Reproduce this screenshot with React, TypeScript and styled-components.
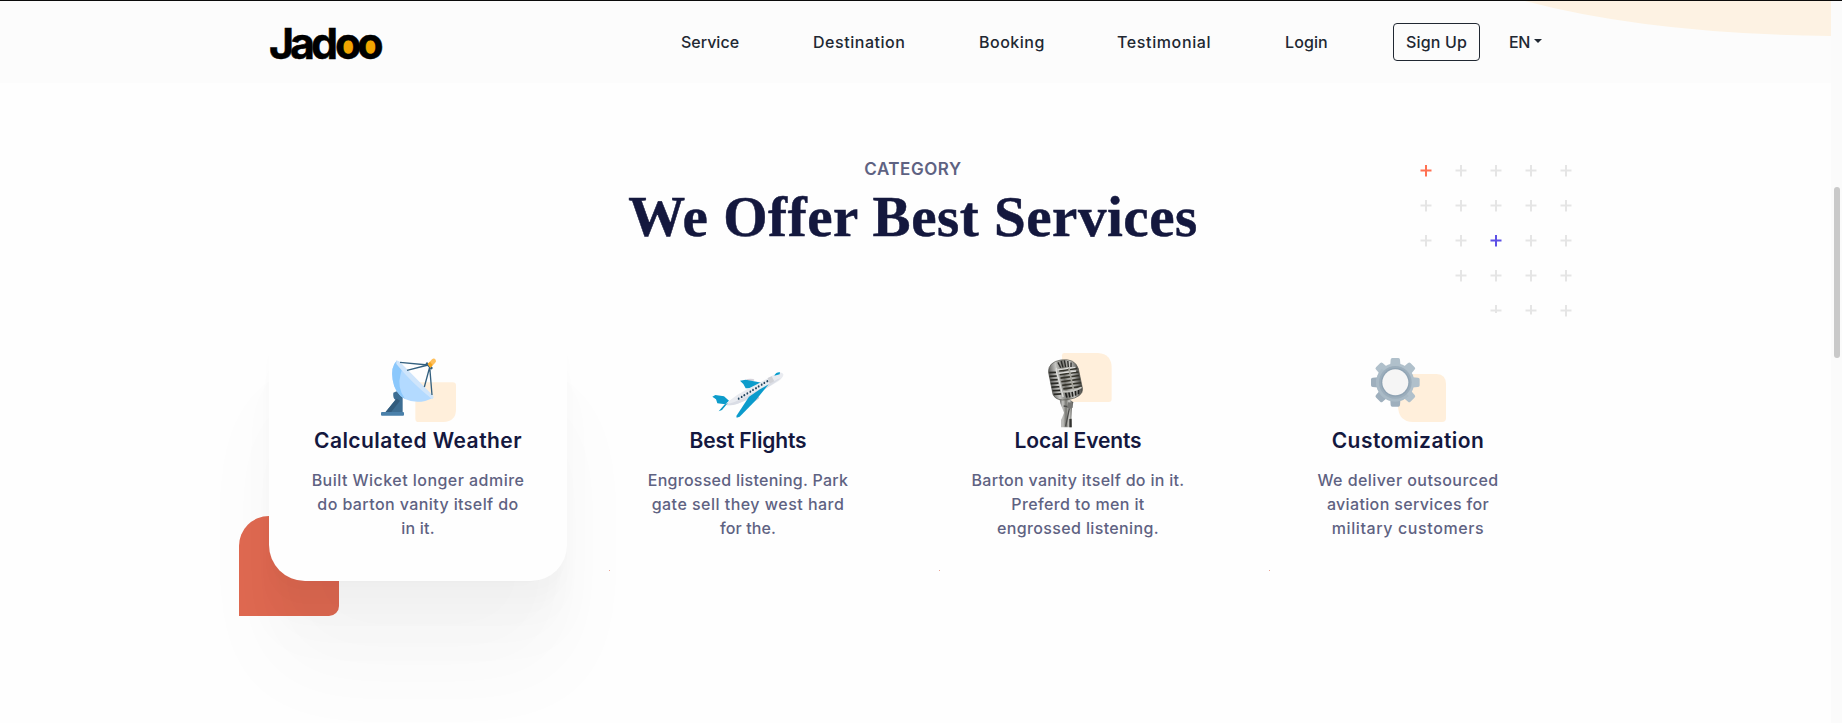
import React from 'react';
import styled, { createGlobalStyle } from 'styled-components';

const GlobalStyle = createGlobalStyle`
  * { box-sizing: border-box; }
  body { margin: 0; background: #fefefe; overflow: hidden; font-family: Inter, sans-serif; }
  h1, h2, h3, p { margin: 0; }
`;

const Page = styled.div`
  display: grid;
  grid-template-columns: 1fr 11px;
  height: 723px;
  border-top: 1px solid #0b0b0b;
  overflow: hidden;
`;

const Content = styled.main`
  position: relative;
  z-index: 0;
  min-width: 0;
`;

const ScrollTrack = styled.div`
  display: flex;
  justify-content: center;
  background: #fbfbfb;
`;

const ScrollThumb = styled.div`
  width: 6px;
  height: 171px;
  margin: 186px 0 0 1px;
  border-radius: 3px;
  background: #c9c9c9;
`;

const HeroCurve = styled.svg`
  position: absolute;
  top: 0;
  right: 0;
  z-index: -1;
`;

const Header = styled.header`
  display: flex;
  height: 82px;
  padding-left: 265px;
  background: rgba(250, 250, 250, 0.45);
`;

const Logo = styled.svg`
  flex: none;
  margin-top: 14px;
`;

const Nav = styled.nav`
  display: flex;
  gap: 74px;
  margin: 28.5px 0 0 286px;
`;

const NavLink = styled.a<{ $width: number; $tracking: number }>`
  width: ${(p) => p.$width}px;
  color: #212832;
  font-size: 16px;
  font-weight: 500;
  line-height: 24px;
  letter-spacing: ${(p) => p.$tracking}px;
  white-space: nowrap;
`;

const SignUp = styled.button`
  flex: none;
  width: 87px;
  height: 38px;
  margin: 22px 0 0 66px;
  padding: 0 0 1px;
  border: 1px solid #212832;
  border-radius: 4px;
  background: transparent;
  color: #212832;
  font: 500 16px/24px Inter, sans-serif;
  letter-spacing: 0.16px;
`;

const Language = styled.div`
  display: flex;
  gap: 5px;
  margin: 28.5px 0 0 29px;
  color: #212832;
  font-size: 16px;
  font-weight: 500;
  line-height: 24px;
  letter-spacing: -0.5px;
`;

const Caret = styled.span`
  width: 0;
  height: 0;
  margin-top: 9.5px;
  margin-left: -1px;
  border: 4px solid transparent;
  border-top-color: #212832;
  border-bottom: 0;
`;

const Intro = styled.section`
  width: 1320px;
  margin-left: 253px;
  padding-top: 74px;
  text-align: center;
`;

const Eyebrow = styled.h3`
  color: #5e6282;
  font-size: 17px;
  font-weight: 600;
  line-height: 24px;
  letter-spacing: 0.55px;
`;

const Heading = styled.h1`
  padding-top: 2px;
  color: #14183e;
  font: 700 57px/68px 'Liberation Serif', serif;
  letter-spacing: 0.54px;
  -webkit-text-stroke: 0.5px #14183e;
`;

const PlusPattern = styled.svg`
  position: absolute;
  top: 162px;
  left: 1418px;
`;

const Services = styled.section`
  display: grid;
  grid-template-columns: repeat(4, 330px);
  margin: 61px 0 0 253px;
`;

const Column = styled.div`
  position: relative;
  padding: 0 16px;
`;

const CornerShape = styled.div`
  position: absolute;
  left: -14px;
  bottom: -35px;
  width: 100px;
  height: 100px;
  border-radius: 30px 0 10px 0;
  background: #df6951;
`;

const CornerDot = styled.i`
  position: absolute;
  left: 26px;
  bottom: 10px;
  width: 1px;
  height: 1px;
  background: #eda596;
`;

const Card = styled.article<{ $raised?: boolean }>`
  position: relative;
  display: flex;
  flex-direction: column;
  align-items: center;
  height: 269px;
  padding-top: 33px;
  border-radius: 36px;
  text-align: center;
  background: ${(p) => (p.$raised ? '#fefefe' : 'transparent')};
  box-shadow: ${(p) =>
    p.$raised
      ? `0 92px 94px rgba(0,0,0,.026), 0 62px 52px rgba(0,0,0,.017),
         0 38.5px 28px rgba(0,0,0,.0125), 0 20px 15px rgba(0,0,0,.01),
         0 8.15px 6.5px rgba(0,0,0,.006), 0 1.85px 3.15px rgba(0,0,0,.003)`
      : 'none'};
`;

const Picture = styled.svg`
  flex: none;
  width: 100px;
  height: 85px;
`;

const CardTitle = styled.h2<{ $tracking: number }>`
  margin-bottom: 16px;
  color: #14183e;
  font-size: 21px;
  font-weight: 600;
  line-height: 22px;
  letter-spacing: ${(p) => p.$tracking}px;
  white-space: nowrap;
`;

const Line = styled.p<{ $tracking: number }>`
  color: #5e6282;
  font-size: 16px;
  font-weight: 500;
  line-height: 24px;
  letter-spacing: ${(p) => p.$tracking}px;
  white-space: nowrap;
`;

const links = [
  { label: 'Service', width: 58, tracking: 0 },
  { label: 'Destination', width: 92, tracking: 0.54 },
  { label: 'Booking', width: 64, tracking: 0.5 },
  { label: 'Testimonial', width: 94, tracking: 0.62 },
  { label: 'Login', width: 42, tracking: 0.1 },
];

const SatelliteDish = () => (
  <Picture viewBox="-6 15 300 255">
    <path d="M142 127H248Q258 127 258 137V208Q258 245 220 246H146Q136 246 136 236V134Q136 127 142 127Z" fill="#ffefdb" />
    <path d="M80 154L98 168V218H45L76 179Q68 174 70 158Z" fill="#3d6d92" />
    <path d="M80 176L90 182L62 218H45Z" fill="#325b7c" />
    <rect x="33" y="216" width="69" height="11" rx="3" fill="#4a80aa" />
    <path d="M80 62Q62 80 68 119Q74 160 105 177Q145 196 190 173Z" fill="#b3daff" />
    <path d="M80 62Q62 80 68 119Q74 160 105 177Q80 142 92 102L97 84Z" fill="#8bc8fc" />
    <path d="M79 61Q87 62 96 72L190 168Q192 174 187 178Q126 130 79 72Z" fill="#cfe5fb" />
    <path d="M90 67L174 75L111 91M180 78L163 141M179 80L186 165" fill="none" stroke="#34607f" strokeWidth="4" />
    <path d="M171 71L184 84" stroke="#34607f" strokeWidth="8" strokeLinecap="round" />
    <path d="M173 72L186 58Q192 53 197 59Q200 64 195 69L181 83Z" fill="#ffc05c" />
    <path d="M173 72L180 65L188 75L181 83Z" fill="#f6a51d" />
  </Picture>
);

const windows = [116, 125, 133, 142, 151, 159, 168, 176, 185, 193, 202];

const Airplane = () => (
  <Picture viewBox="-6 -15 300 255">
    <ellipse cx="151" cy="90" rx="12" ry="4" fill="#d6d3db" />
    <ellipse cx="170" cy="146" rx="9" ry="4" transform="rotate(-30 170 146)" fill="#d8ced5" />
    <path d="M120 92L137 89L190 99L165 115H137L130 102Z" fill="#0d9ccb" />
    <path d="M37 140L46 135L72 139L87 152L76 163L52 160L48 148Z" fill="#0d9ccb" />
    <path d="M76 164Q103 134 174 101L226 72Q246 63 250 73Q251 81 236 93Q184 125 137 151Q99 171 76 164Z" fill="#e9ebf0" />
    <path d="M76 164Q100 160 141 139L232 88L243 84Q224 101 137 151Q99 171 76 164Z" fill="#dadde5" />
    <path d="M203 84L215 79L223 94L209 101Z" fill="#d0d1d6" />
    <path d="M223 77Q228 66 240 67L239 73Z" fill="#069dce" />
    <path d="M84 158L73 164L56 184L66 180Z" fill="#0797c4" />
    <path d="M206 103L180 118L147 140L109 198L110 203L119 200L166 152Z" fill="#0b9bcc" />
    {windows.map((x, i) => (
      <ellipse key={x} cx={x} cy={146 - i * 5.25} rx="2.6" ry="3.6" fill="#23455f" />
    ))}
  </Picture>
);

const Microphone = () => (
  <Picture viewBox="-6 15 300 255">
    <defs>
      <linearGradient id="chrome">
        <stop offset="0" stopColor="#5b5b59" />
        <stop offset=".25" stopColor="#c5c5c2" />
        <stop offset=".48" stopColor="#757570" />
        <stop offset=".7" stopColor="#ccccc8" />
        <stop offset="1" stopColor="#3d3d39" />
      </linearGradient>
    </defs>
    <path d="M103 39H204Q245 42 245 84V177Q245 186 236 186H105Q96 186 96 177V46Q96 39 103 39Z" fill="#ffefdb" />
    <path d="M88 174L121 180L130 187L126 204L124 238L125 262H94V239L102 218L91 190Z" fill="url(#chrome)" />
    <path d="M101 198L119 201L115 220L107 259" fill="none" stroke="#4c4c4a" strokeWidth="4" />
    <path d="M114 187L128 188V203L118 207L111 202Z" fill="#777774" />
    <path d="M118 237L125 236V262H118Z" fill="#323230" />
    <g transform="rotate(-8 103 118)">
      <path d="M59 90Q62 60 101 59Q143 59 149 92L153 153Q152 178 106 180Q68 180 63 158Z" fill="url(#chrome)" stroke="#555550" strokeWidth="2" />
      <path d="M91 65L97 82M101 62L104 82M111 62L112 82M121 65L120 83M130 71L128 84" stroke="#292927" strokeWidth="4" />
      <path d="M61 92L81 94M60 103L82 105M61 114L83 116M61 125L84 127M62 136L85 138M63 147L86 149M65 158L88 160" stroke="#292925" strokeWidth="5" />
      <path d="M91 91H146M91 102H148M92 113H149M93 124H150M94 135H151M96 146H152" stroke="#34332b" strokeWidth="5" />
      <path d="M85 81Q80 85 86 112L92 170M86 87H141M88 98H141" fill="none" stroke="#dededb" strokeWidth="4" />
      <path d="M121 85L126 154" stroke="#a5a49c" strokeWidth="5" />
      <path d="M101 158L103 173M111 158L112 174M121 158V173M131 157L130 171M141 155L139 168" stroke="#20201e" strokeWidth="5" />
      <path d="M94 154Q124 160 151 149" fill="none" stroke="#c5c5c0" strokeWidth="5" />
    </g>
  </Picture>
);

const teeth = [0, 45, 90, 135, 180, 225, 270, 315];

const Gear = () => (
  <Picture viewBox="24 15 300 255">
    <path d="M153 102H260Q288 104 288 132V234Q288 246 276 246H189Q146 244 144 200V112Q144 102 153 102Z" fill="#ffefdb" />
    {teeth.map((angle) => (
      <path
        key={angle}
        transform={`rotate(${angle} 136 127)`}
        d="M120 84L122 59Q122 54 127 54H145Q150 54 150 59L152 84Z"
        fill={angle >= 180 && angle < 315 ? '#9eafbd' : '#b0c0cb'}
      />
    ))}
    <circle cx="136" cy="127" r="57" fill="#b0c0cb" />
    <path d="M95 87A57 57 0 0 0 176 168L168 159A49 49 0 0 1 102 91Z" fill="#a9bac6" />
    <circle cx="136" cy="127" r="49" fill="#9caebc" />
    <circle cx="136" cy="127" r="43" fill="#8fa3b3" />
    <circle cx="136" cy="127" r="39" fill="#f5f5f5" />
  </Picture>
);

const services = [
  {
    title: 'Calculated Weather', tracking: 0.46, Art: SatelliteDish,
    lines: [['Built Wicket longer admire', 0.46], ['do barton vanity itself do', 0.41], ['in it.', 0.2]],
  },
  {
    title: 'Best Flights', tracking: -0.15, Art: Airplane,
    lines: [['Engrossed listening. Park', 0.27], ['gate sell they west hard', 0.48], ['for the.', 0.1]],
  },
  {
    title: 'Local Events', tracking: -0.15, Art: Microphone,
    lines: [['Barton vanity itself do in it.', 0.31], ['Preferd to men it', 0.38], ['engrossed listening.', 0.36]],
  },
  {
    title: 'Customization', tracking: 0.45, Art: Gear,
    lines: [['We deliver outsourced', 0.44], ['aviation services for', 0.35], ['military customers', 0.6]],
  },
] as { title: string; tracking: number; Art: () => React.ReactElement; lines: [string, number][] }[];

const firstColumn = [0, 0, 0, 1, 2];

const Pluses = () => (
  <PlusPattern width="156" height="156">
    {firstColumn.flatMap((start, row) =>
      [0, 1, 2, 3, 4].filter((col) => col >= start).map((col) => {
        const x = 8 + col * 35;
        const y = 7.5 + row * 35;
        const color = row === 0 && col === 0 ? '#ff7152' : row === 2 && col === 2 ? '#5d50e6' : '#e5e5e5';
        const foot = row === 4 && col < 4 ? (col === 2 ? 2.5 : 4) : 6;
        return (
          <path key={`${row}-${col}`} d={`M${x - 5.5} ${y}h11M${x} ${y - 5.5}V${y + foot}`} stroke={color} strokeWidth="2" />
        );
      }),
    )}
  </PlusPattern>
);

export default function App() {
  return (
    <>
      <GlobalStyle />
      <Page>
        <Content>
          <HeroCurve width="310" height="36" viewBox="0 0 310 36">
            <path d="M0 -1Q126 33 310 35V-1Z" fill="#ffecd0" />
          </HeroCurve>
          <Header>
            <Logo width="130" height="54" viewBox="265 15 130 54">
              <ellipse cx="348" cy="47.5" rx="8" ry="9" fill="#f1a501" />
              <ellipse cx="370.3" cy="47.5" rx="8" ry="9" fill="#f1a501" />
              <text x="269 290 311 335 357.3" y="58.7" fontFamily="Inter, sans-serif" fontSize="43" fontWeight="700" stroke="#000" strokeWidth=".5">Jadoo</text>
            </Logo>
            <Nav>
              {links.map((l) => (
                <NavLink key={l.label} $width={l.width} $tracking={l.tracking}>{l.label}</NavLink>
              ))}
            </Nav>
            <SignUp>Sign Up</SignUp>
            <Language>EN<Caret /></Language>
          </Header>
          <Intro>
            <Eyebrow>CATEGORY</Eyebrow>
            <Heading>We Offer Best Services</Heading>
          </Intro>
          <Pluses />
          <Services>
            {services.map(({ title, tracking, Art, lines }, i) => (
              <Column key={title}>
                {i === 0 ? <CornerShape /> : <CornerDot />}
                <Card $raised={i === 0}>
                  <Art />
                  <CardTitle $tracking={tracking}>{title}</CardTitle>
                  {lines.map(([text, spacing]) => (
                    <Line key={text} $tracking={spacing}>{text}</Line>
                  ))}
                </Card>
              </Column>
            ))}
          </Services>
        </Content>
        <ScrollTrack>
          <ScrollThumb />
        </ScrollTrack>
      </Page>
    </>
  );
}
